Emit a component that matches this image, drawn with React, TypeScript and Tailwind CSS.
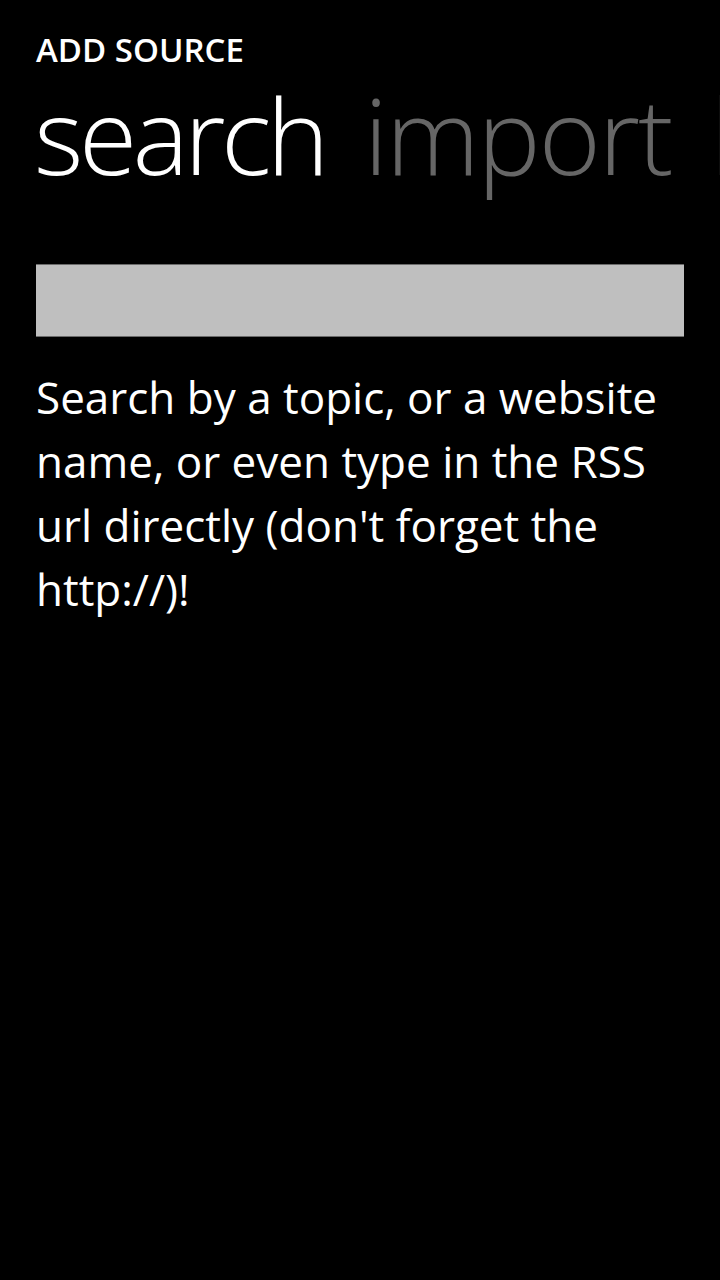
export default function App() {
  return (
    <div className="w-[720px] h-[1280px] overflow-hidden bg-black font-['Open_Sans',sans-serif] text-white">
      {/* Title */}
      <div className="pl-9 pt-[31px] text-[33px] font-semibold leading-[38px]">ADD SOURCE</div>

      {/* Pivot headers */}
      <div className="flex gap-[39px] whitespace-nowrap pl-[34px] mt-[10px] text-[106px] font-light leading-[110px] tracking-[-2px]">
        <span className="text-white tracking-[-4.5px]">search</span>
        <span className="text-[#666666]">import</span>
        <span className="text-[#666666]">library</span>
      </div>

      {/* Search box */}
      <div className="mx-9 mt-[75px] h-[73px] bg-[#bfbfbf] border-y border-[#6b6b6b]" />

      {/* Hint */}
      <p className="px-9 pt-[28px] text-[44px] leading-[64px]">
        Search by a topic, or a website name, or even type in the RSS url directly (don't forget the http://)!
      </p>
    </div>
  )
}
